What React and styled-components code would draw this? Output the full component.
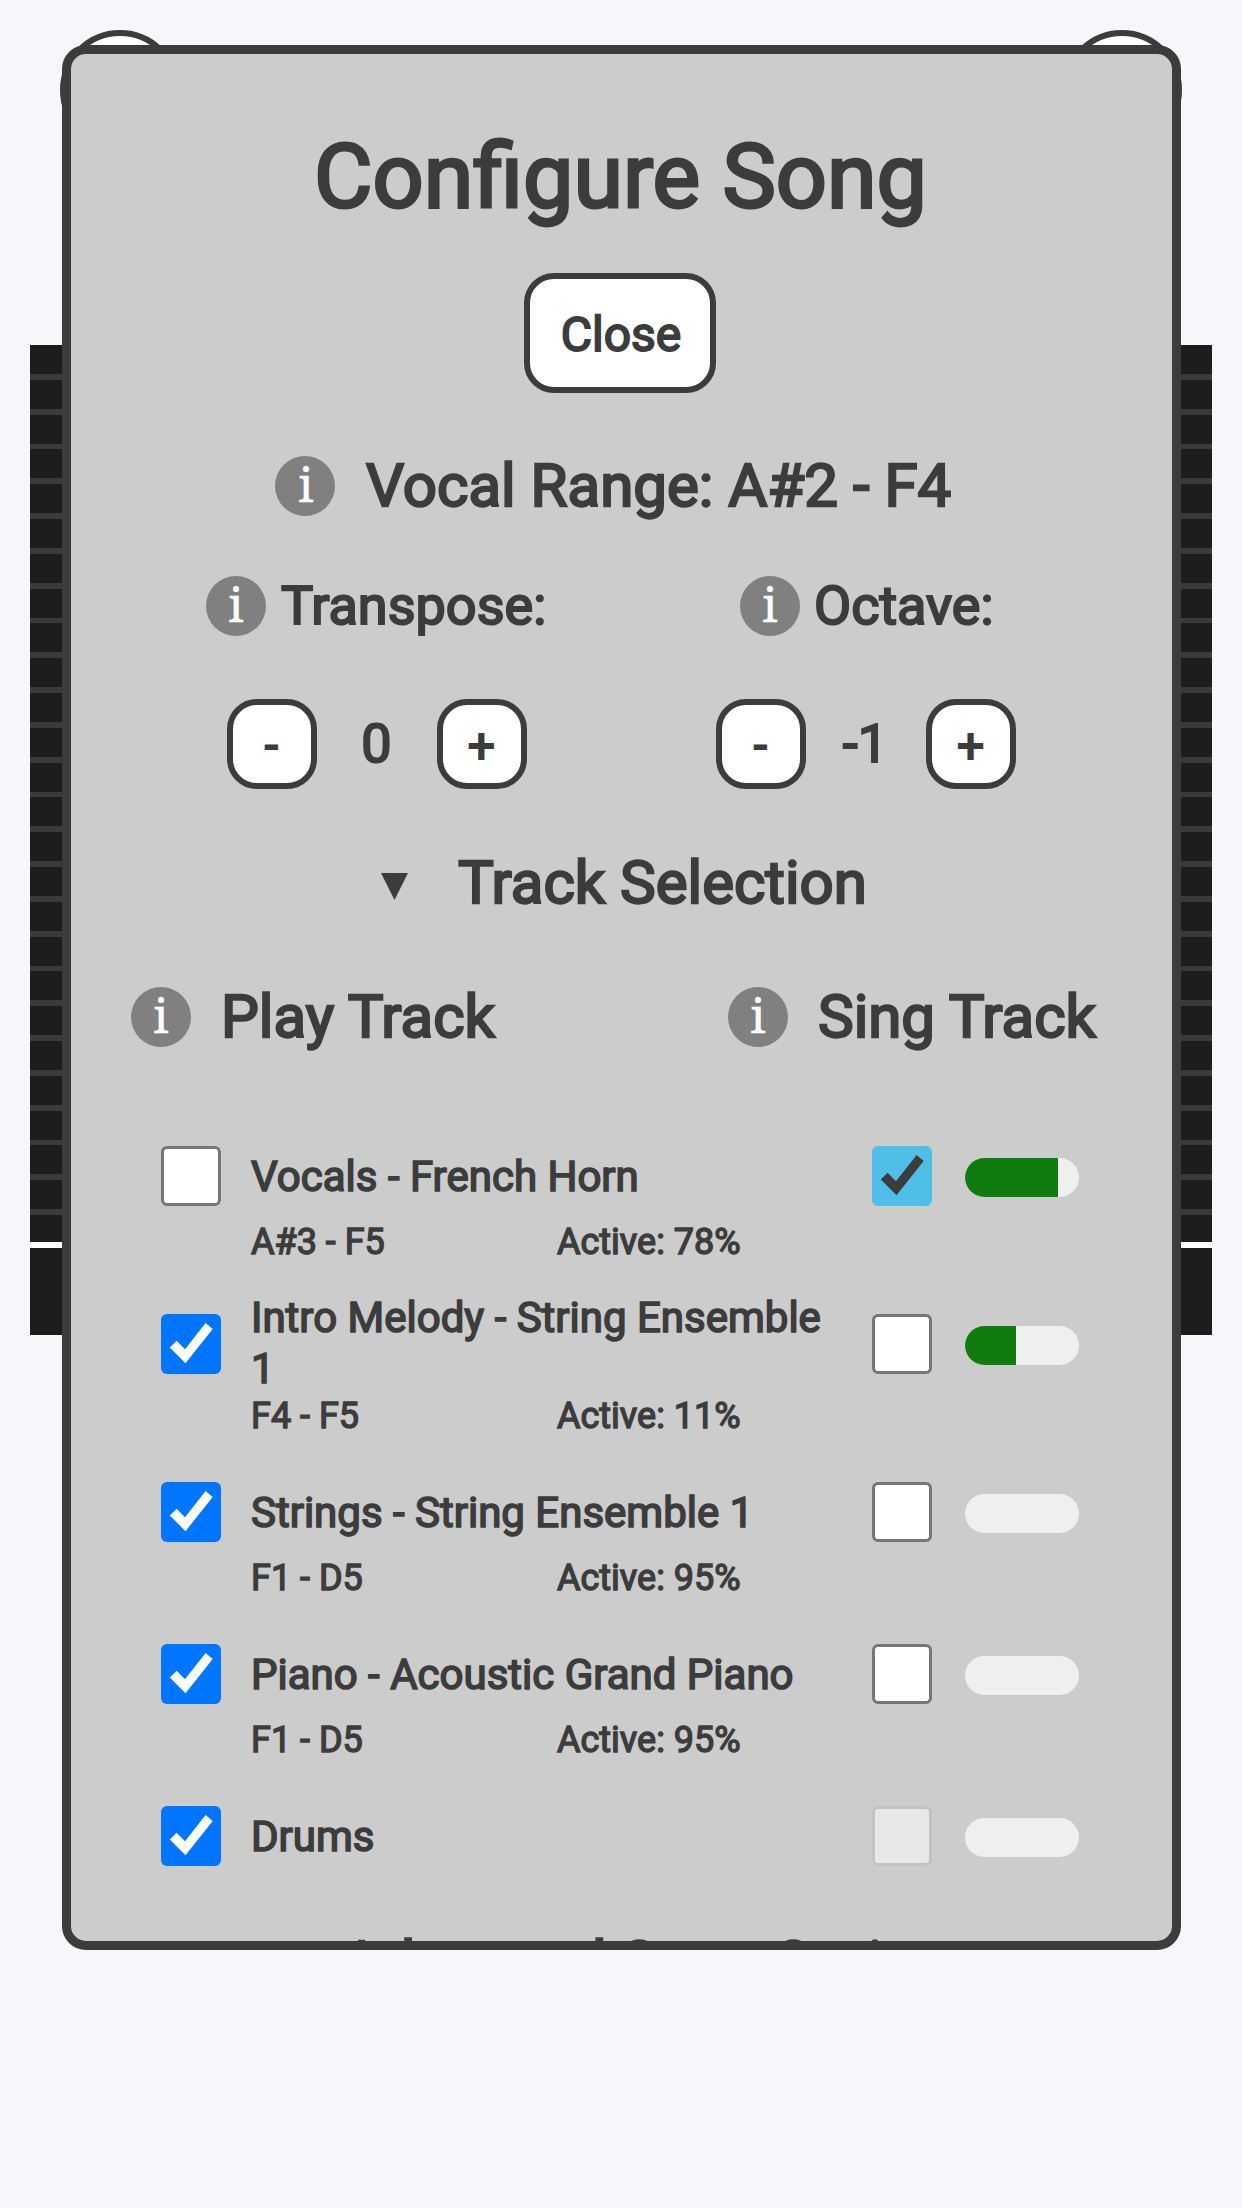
import React from "react";
import styled, { createGlobalStyle } from "styled-components";

const ink = "#3c3c3d";

const GlobalStyle = createGlobalStyle`
  * { box-sizing: border-box; }
  html { background: #f5f7fb; }
  body {
    margin: 0;
    background: #f5f7fb;
    color: ${ink};
    font-family: Roboto, "Liberation Sans", sans-serif;
    font-weight: 400;
    overflow: hidden;
  }
`;

const Page = styled.div`
  position: relative;
  width: 1242px;
  height: 2208px;
  overflow: hidden;
`;

const Backdrop = styled.div`
  height: 100%;
  padding: 30px 30px 0;
`;

const CornerBar = styled.div`
  display: flex;
  justify-content: space-between;
  height: 315px;
  padding: 0 0 0 30px;
  margin-right: 30px;
`;

const RoundButton = styled.div`
  width: 120px;
  height: 120px;
  border: 6px solid ${ink};
  border-radius: 50%;
  background: #fff;
`;

const Lanes = styled.div`
  height: 897px;
  background: repeating-linear-gradient(
    to bottom,
    #1d1d1d 0 29px,
    #3a3a3b 29px 34.8px
  );
`;

const HitLine = styled.div`
  height: 6px;
  background: #fff;
`;

const LaneFooter = styled.div`
  height: 87px;
  background: #1d1d1d;
`;

const Modal = styled.section`
  position: absolute;
  left: 62px;
  top: 45px;
  width: 1119px;
  height: 1905px;
  display: flex;
  flex-direction: column;
  overflow: hidden;
  background: #ccc;
  border: 9px solid ${ink};
  border-radius: 24px;
`;

const Text = styled.span`
  display: block;
  font-size: ${(p) => p.$size}px;
  line-height: ${(p) => p.$line || p.$size * 1.2}px;
  -webkit-text-stroke: ${(p) => p.$size / 26}px ${ink};
  white-space: ${(p) => (p.$wrap ? "normal" : "nowrap")};
`;

const Title = styled(Text).attrs({ as: "h1", $size: 90, $line: 108 })`
  margin: 69px 2px 0 0;
  font-size: 89.8px;
  font-weight: 400;
  -webkit-text-stroke-width: 3px;
  text-align: center;
`;

const CloseButton = styled.button`
  align-self: center;
  flex: none;
  display: flex;
  align-items: center;
  justify-content: center;
  width: 192px;
  height: 120px;
  margin: 42px 3px 0 0;
  padding: 4px 0 0 2px;
  color: ${ink};
  font-family: inherit;
  background: #fff;
  border: 6px solid ${ink};
  border-radius: 30px;
`;

const Row = styled.div`
  flex: none;
  display: flex;
  align-items: center;
  height: 60px;
  margin-top: ${(p) => p.$top}px;
  padding-left: ${(p) => p.$left}px;
  gap: ${(p) => p.$gap || 0}px;
`;

const Label = styled.div`
  display: flex;
  align-items: center;
  gap: ${(p) => p.$gap}px;
  width: ${(p) => (p.$width ? p.$width + "px" : "auto")};
`;

const Info = styled.span`
  display: block;
  width: 60px;
  height: 60px;
  padding-left: ${(p) => p.$shift || 0}px;
  border-radius: 50%;
  background: #808080;
  color: #fff;
  font: 48px/56px "Noto Serif", "Droid Serif", "DejaVu Serif", serif;
  -webkit-text-stroke: 0.4px #fff;
  text-align: center;
`;

const SteppersRow = styled.div`
  flex: none;
  display: flex;
  gap: 189px;
  height: 90px;
  margin-top: 63px;
  padding-left: 156px;
`;

const Stepper = styled.div`
  display: flex;
  align-items: center;
  justify-content: space-between;
  width: 300px;
`;

const StepValue = styled(Text)`
  padding-right: 1px;
`;

const StepButton = styled(CloseButton)`
  width: 90px;
  height: 90px;
  margin: 0;
  padding: 3px 1px 0 0;
`;

const TrackList = styled.div`
  flex: none;
  display: flex;
  flex-direction: column;
  margin-top: 99px;
  padding-left: 90px;
`;

const TrackRow = styled.div`
  display: flex;
  align-items: flex-start;
  height: ${(p) => p.$height}px;
`;

const TrackInfo = styled.div`
  width: 591px;
  margin-left: 30px;
  margin-top: ${(p) => (p.$two ? -22 : 5)}px;
`;

const TrackMeta = styled.div`
  display: flex;
  margin-top: ${(p) => (p.$two ? 1 : 19)}px;
`;

const MetaCell = styled.div`
  width: ${(p) => p.$width}px;
`;

const Meter = styled.div`
  width: 114px;
  height: 39px;
  margin: 12px 0 0 33px;
  border-radius: 20px;
  background: #efefef;
  overflow: hidden;
`;

const MeterFill = styled.div`
  height: 100%;
  background: #107c10;
`;

const Box = styled.span`
  flex: none;
  display: block;
  width: 60px;
  height: 60px;
  margin-left: ${(p) => p.$left || 0}px;
  border-radius: 6px;
  border: ${(p) =>
    p.$fill ? "none" : p.$disabled ? "3px solid #c3c3c3" : "3px solid #767676"};
  background: ${(p) => p.$fill || (p.$disabled ? "#e8e8e8" : "#fff")};
  svg { display: block; }
`;

function Checkbox({ checked, fill = "#0075ff", mark = "#fff", disabled, left }) {
  return (
    <Box $fill={checked ? fill : null} $disabled={disabled} $left={left}>
      {checked && (
        <svg width="60" height="60" viewBox="0 0 60 60">
          <path
            d="M8.8 33.5 L15.6 26.7 L24 35.2 L44.6 9 L51.7 15 L24.5 49.2 Z"
            fill={mark}
          />
        </svg>
      )}
    </Box>
  );
}

const tracks = [
  { name: "Vocals - French Horn", range: "A#3 - F5", active: 78, play: false, sing: true, level: 93, height: 168 },
  { name: "Intro Melody - String Ensemble 1", range: "F4 - F5", active: 11, play: true, level: 51, height: 168, two: true },
  { name: "Strings - String Ensemble 1", range: "F1 - D5", active: 95, play: true, level: 0, height: 162 },
  { name: "Piano - Acoustic Grand Piano", range: "F1 - D5", active: 95, play: true, level: 0, height: 162 },
  { name: "Drums", play: true, level: 0, height: 60, locked: true },
];

const ArrowIcon = styled.svg`
  flex: none;
  margin-top: 6px;
`;

function Arrow() {
  return (
    <ArrowIcon width="27" height="27" viewBox="0 0 27 27">
      <path d="M0 0H27L13.5 27Z" fill={ink} />
    </ArrowIcon>
  );
}

function StepperControl({ value }) {
  return (
    <Stepper>
      <StepButton><Text $size={48}>-</Text></StepButton>
      <StepValue $size={54}>{value}</StepValue>
      <StepButton><Text $size={48}>+</Text></StepButton>
    </Stepper>
  );
}

function Track({ t }) {
  return (
    <TrackRow $height={t.height}>
      <Checkbox checked={t.play} />
      <TrackInfo $two={t.two}>
        <Text $size={42} $line={51} $wrap>{t.name}</Text>
        {t.range && (
          <TrackMeta $two={t.two}>
            <MetaCell $width={306}><Text $size={36} $line={42}>{t.range}</Text></MetaCell>
            <Text $size={36} $line={42}>Active: {t.active}%</Text>
          </TrackMeta>
        )}
      </TrackInfo>
      <Checkbox checked={t.sing} fill="#4fbfe8" mark={ink} disabled={t.locked} left={30} />
      <Meter><MeterFill style={{ width: t.level }} /></Meter>
    </TrackRow>
  );
}

export default function App() {
  return (
    <>
      <GlobalStyle />
      <Page>
        <Backdrop>
          <CornerBar><RoundButton /><RoundButton /></CornerBar>
          <Lanes />
          <HitLine />
          <LaneFooter />
        </Backdrop>
        <Modal>
          <Title>Configure Song</Title>
          <CloseButton><Text $size={48}>Close</Text></CloseButton>
          <Row $top={63} $left={204}>
            <Label $gap={31}>
              <Info $shift={2}>i</Info>
              <Text $size={60}>Vocal Range: A#2 - F4</Text>
            </Label>
          </Row>
          <Row $top={60} $left={135}>
            <Label $gap={15} $width={534}>
              <Info>i</Info>
              <Text $size={54}>Transpose:</Text>
            </Label>
            <Label $gap={14}>
              <Info>i</Info>
              <Text $size={54}>Octave:</Text>
            </Label>
          </Row>
          <SteppersRow>
            <StepperControl value="0" />
            <StepperControl value="-1" />
          </SteppersRow>
          <Row $top={64} $left={310} $gap={50}>
            <Arrow />
            <Text $size={60}>Track Selection</Text>
          </Row>
          <Row $top={74} $left={60}>
            <Label $gap={30} $width={597}>
              <Info>i</Info>
              <Text $size={60}>Play Track</Text>
            </Label>
            <Label $gap={30}>
              <Info>i</Info>
              <Text $size={60}>Sing Track</Text>
            </Label>
          </Row>
          <TrackList>
            {tracks.map((t) => <Track key={t.name} t={t} />)}
          </TrackList>
          <Row $top={67} $left={194} $gap={50}>
            <Arrow />
            <Text $size={60}>Advanced Song Options</Text>
          </Row>
        </Modal>
      </Page>
    </>
  );
}
